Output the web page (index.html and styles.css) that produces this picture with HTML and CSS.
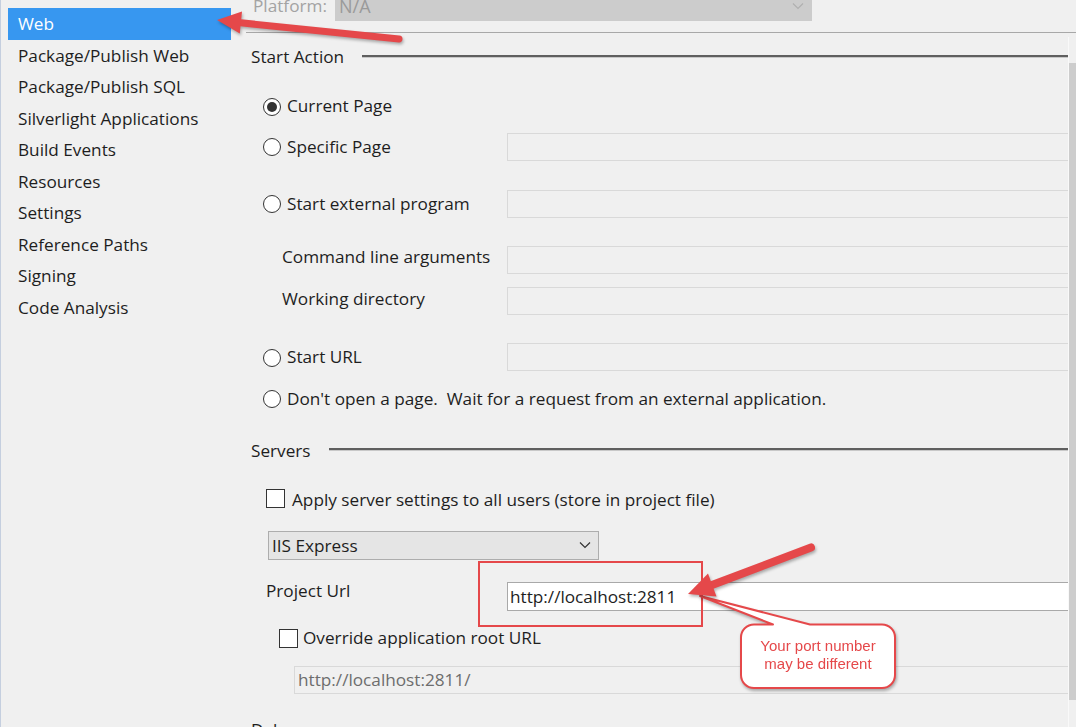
FILE: index.html
```html
<!DOCTYPE html>
<html>
<head>
<meta charset="utf-8">
<title>Web properties</title>
<link rel="stylesheet" href="styles.css">
</head>
<body>
<div class="app">
  <nav class="sidebar">
    <div class="nav-item active">Web</div>
    <div class="nav-item">Package/Publish Web</div>
    <div class="nav-item">Package/Publish SQL</div>
    <div class="nav-item">Silverlight Applications</div>
    <div class="nav-item">Build Events</div>
    <div class="nav-item">Resources</div>
    <div class="nav-item">Settings</div>
    <div class="nav-item">Reference Paths</div>
    <div class="nav-item">Signing</div>
    <div class="nav-item">Code Analysis</div>
  </nav>
  <div class="main">
    <div class="main-header">
      <div class="platform-row">
        <span class="platform-label">Platform:</span>
        <div class="select select-disabled">
          <span>N/A</span>
          <svg class="chev" width="12" height="8" viewBox="0 0 12 8"><path d="M1 1.5 L6 6.5 L11 1.5" fill="none" stroke="#b0b0b0" stroke-width="1.2"/></svg>
        </div>
      </div>
      <div class="top-rule"></div>
    </div>
    <div class="body">
      <div class="content">
        <div class="section-head sh-start"><span>Start Action</span><div class="rule"></div></div>

        <div class="row r-current">
          <div class="opt"><span class="radio checked"></span><span>Current Page</span></div>
        </div>
        <div class="row r-specific">
          <div class="opt"><span class="radio"></span><span>Specific Page</span></div>
          <div class="field"></div>
        </div>
        <div class="row r-external">
          <div class="opt"><span class="radio"></span><span>Start external program</span></div>
          <div class="field"></div>
        </div>
        <div class="row r-command">
          <div class="sublabel lh22">Command line arguments</div>
          <div class="field"></div>
        </div>
        <div class="row r-working">
          <div class="sublabel lh24">Working directory</div>
          <div class="field"></div>
        </div>
        <div class="row r-url">
          <div class="opt"><span class="radio"></span><span>Start URL</span></div>
          <div class="field"></div>
        </div>
        <div class="row r-dont">
          <div class="opt wide"><span class="radio"></span><span class="pre">Don't open a page.  Wait for a request from an external application.</span></div>
        </div>

        <div class="section-head sh-servers"><span>Servers</span><div class="rule"></div></div>

        <div class="row r-apply">
          <div class="check-opt"><span class="checkbox"></span><span>Apply server settings to all users (store in project file)</span></div>
        </div>
        <div class="row r-iis">
          <div class="select select-iis">
            <span>IIS Express</span>
            <svg class="chev" width="12" height="8" viewBox="0 0 12 8"><path d="M1 1.5 L6 6.5 L11 1.5" fill="none" stroke="#333" stroke-width="1.2"/></svg>
          </div>
        </div>
        <div class="row r-project">
          <div class="proj-label">Project Url</div>
          <div class="field field-white">http://localhost:2811</div>
        </div>
        <div class="row r-override">
          <div class="check-opt"><span class="checkbox"></span><span>Override application root URL</span></div>
        </div>
        <div class="row r-root">
          <div class="field field-disabled">http://localhost:2811/</div>
        </div>
        <div class="section-head sh-debug"><span>Debuggers</span><div class="rule"></div></div>
      </div>
      <div class="scrollbar"><div class="thumb"></div></div>
    </div>
  </div>
</div>

<svg class="annotations" width="1076" height="727" viewBox="0 0 1076 727">
  <g class="arrow">
    <line x1="399" y1="39" x2="236" y2="22.3" stroke="#e5484a" stroke-width="7" stroke-linecap="round"/>
    <polygon points="217,20 242,11.6 239.8,33.4" fill="#e5484a"/>
  </g>
  <rect x="479" y="562" width="223" height="64" fill="none" stroke="#e5484a" stroke-width="2"/>
  <g class="callout">
    <path d="M754,624.5 H773 L700,596 L810,624.5 H882 A13,13 0 0 1 895,637.5 V675 A13,13 0 0 1 882,688 H754 A13,13 0 0 1 741,675 V637.5 A13,13 0 0 1 754,624.5 Z" fill="#fff" stroke="#e5484a" stroke-width="2" stroke-linejoin="round"/>
    <text x="818" y="651" class="callout-text" text-anchor="middle">Your port number</text>
    <text x="818" y="669" class="callout-text" text-anchor="middle">may be different</text>
  </g>
  <g class="arrow">
    <line x1="811" y1="547.5" x2="712" y2="585" stroke="#e5484a" stroke-width="8" stroke-linecap="round"/>
    <polygon points="688,594 716.5,596.5 708,573.6" fill="#e5484a"/>
  </g>
</svg>
</body>
</html>
```

FILE: styles.css
```css
html, body {
  margin: 0;
  padding: 0;
  overflow: hidden;
}
body {
  width: 1076px;
  height: 727px;
  position: relative;
  background: #f0f0f0;
  font-family: "Open Sans", "Noto Sans", sans-serif;
  font-size: 17.2px;
  color: #1e1e1e;
}
.app {
  display: flex;
  height: 727px;
}
.sidebar {
  width: 237px;
  flex: none;
  box-sizing: border-box;
  border-left: 1px solid #c5cfdf;
  padding-top: 8.3px;
}
.nav-item {
  margin-left: 7px;
  width: 223px;
  height: 31.5px;
  line-height: 31.5px;
  padding-left: 10px;
  box-sizing: border-box;
  white-space: nowrap;
}
.nav-item.active {
  background: #3797f0;
  color: #fff;
}
.main {
  flex: 1;
  display: flex;
  flex-direction: column;
  min-width: 0;
}
.main-header {
  height: 37px;
  flex: none;
}
.platform-row {
  display: flex;
  align-items: center;
  margin-top: -9px;
  height: 30px;
  padding-left: 16px;
}
.platform-label {
  color: #a3a3a3;
  width: 82px;
  line-height: 30px;
}
.select {
  display: flex;
  align-items: center;
  justify-content: space-between;
  box-sizing: border-box;
}
.select-disabled {
  width: 477px;
  height: 30px;
  background: #cccccc;
  color: #9a9a9a;
  padding: 0 8px 0 4px;
  font-size: 18px;
}
.top-rule {
  margin-top: 11px;
  margin-left: 9px;
  height: 1px;
  background: #a8a8a8;
}
.body {
  flex: 1;
  display: flex;
  min-height: 0;
}
.content {
  flex: 1;
  padding-left: 14px;
  min-width: 0;
}
.scrollbar {
  width: 8px;
  flex: none;
  border-left: 1px solid #f9f9f9;
  box-sizing: border-box;
  padding-top: 26px;
}
.thumb {
  height: 637px;
  background: #cdcdcd;
}
.section-head {
  display: flex;
  align-items: flex-start;
  height: 24px;
  line-height: 24px;
  white-space: nowrap;
}
.section-head .rule {
  flex: 1;
  height: 2px;
  background: #5f5f5f;
  margin-top: 10px;
  margin-left: 18px;
  box-shadow: 0 1px 0 #c8c8c8;
}
.sh-start { margin-top: 7.5px; }
.sh-servers { margin-top: 26px; }
.sh-servers .rule { margin-top: 9.5px; }
.sh-debug { margin-top: 24.4px; }

.row {
  display: flex;
  align-items: flex-start;
  height: 28px;
}
.opt {
  display: flex;
  align-items: center;
  height: 28px;
  line-height: 28px;
  width: 244px;
  margin-left: 12px;
  flex: none;
  white-space: nowrap;
}
.opt.wide { width: auto; }
.pre { white-space: pre; }
.radio {
  width: 18px;
  height: 18px;
  box-sizing: border-box;
  border: 1px solid #333;
  border-radius: 50%;
  background: #fff;
  margin-right: 6px;
  margin-top: 1px;
  position: relative;
  flex: none;
}
.radio.checked::after {
  content: "";
  position: absolute;
  left: 3px;
  top: 3px;
  width: 10px;
  height: 10px;
  border-radius: 50%;
  background: #333;
}
.field {
  flex: 1;
  height: 28px;
  box-sizing: border-box;
  border: 1px solid #d9d9d9;
  border-right: none;
  background: #f0f0f0;
}
.sublabel {
  width: 225px;
  margin-left: 31px;
  flex: none;
  white-space: nowrap;
}
.lh22 { line-height: 22px; }
.lh24 { line-height: 24px; }

.r-current { margin-top: 23.8px; }
.r-specific { margin-top: 12.7px; }
.r-external { margin-top: 28.7px; }
.r-command { margin-top: 28.3px; }
.r-working { margin-top: 13.5px; }
.r-url { margin-top: 28px; }
.r-dont { margin-top: 13.5px; }
.r-apply { margin-top: 22.6px; }
.r-iis { margin-top: 17.4px; height: 29px; }
.r-project { margin-top: 22px; height: 29px; }
.r-override { margin-top: 12.6px; }
.r-root { margin-top: 14.4px; }

.check-opt {
  display: flex;
  align-items: center;
  height: 28px;
  line-height: 28px;
  white-space: nowrap;
}
.checkbox {
  width: 19px;
  height: 19px;
  box-sizing: border-box;
  border: 1.5px solid #333;
  background: #fff;
  flex: none;
}
.r-apply .check-opt { margin-left: 15px; }
.r-apply .checkbox { margin-right: 7px; margin-top: -2px; }
.r-override .check-opt { margin-left: 28px; }
.r-override .checkbox { margin-right: 5px; margin-top: 1px; }

.select-iis {
  margin-left: 17px;
  width: 331px;
  height: 29px;
  background: #e5e5e5;
  border: 1px solid #adadad;
  padding: 0 7px 0 3px;
  line-height: 27px;
}
.proj-label {
  margin-left: 15px;
  width: 241px;
  flex: none;
  line-height: 18px;
}
.field-white {
  height: 29px;
  background: #fff;
  border: 1px solid #a9a9a9;
  border-right: none;
  line-height: 27px;
  padding-left: 2px;
  white-space: nowrap;
}
.field-disabled {
  margin-left: 43px;
  color: #6d6d6d;
  line-height: 26px;
  padding-left: 3px;
  white-space: nowrap;
}

.annotations {
  position: absolute;
  left: 0;
  top: 0;
  pointer-events: none;
}
.arrow, .callout {
  filter: drop-shadow(1px 2px 1.5px rgba(0, 0, 0, 0.3));
}
.callout-text {
  font-family: "Liberation Sans", Arial, sans-serif;
  font-size: 15px;
  fill: #e5484a;
}
```
